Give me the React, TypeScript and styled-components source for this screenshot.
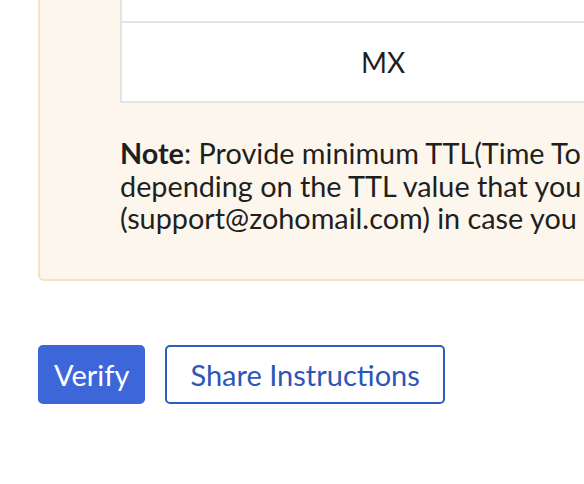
import React from 'react';
import styled, { createGlobalStyle } from 'styled-components';

const GlobalStyle = createGlobalStyle`
  body {
    margin: 0;
    font-family: Lato, "Open Sans", sans-serif;
    background: #fff;
    overflow: hidden;
  }
`;

const Page = styled.div`
  width: 584px;
  height: 484px;
  overflow: hidden;
  padding-left: 38px;
  box-sizing: border-box;
`;

const NotePanel = styled.div`
  margin-top: -42px;
  width: 720px;
  box-sizing: border-box;
  background: #fdf6ec;
  border: 2px solid #f6e3c2;
  border-radius: 6px;
  padding: 0 0 44px 80px;
`;

const RecordTable = styled.table`
  width: 526px;
  border-collapse: collapse;
  background: #fff;
`;

const Cell = styled.td<{ $h: number }>`
  height: ${p => p.$h}px;
  border: 2px solid #e2e4e7;
  text-align: center;
  font-size: 28px;
  color: #1f1f1f;
  padding: 0;
`;

const Note = styled.p`
  margin: 34px 0 0;
  font-size: 28.8px;
  line-height: 32.5px;
  color: #1f1f1f;
  white-space: nowrap;

  b {
    font-weight: 700;
  }
`;

const Actions = styled.div`
  display: flex;
  gap: 20px;
  margin-top: 64px;
`;

const Button = styled.button<{ $primary?: boolean }>`
  height: 59px;
  padding: 0 ${p => (p.$primary ? 14 : 23)}px;
  font-family: Lato, sans-serif;
  font-size: 29px;
  border-radius: 5px;
  box-sizing: border-box;
  cursor: pointer;
  border: 2px solid ${p => (p.$primary ? '#3d67d8' : '#2f5bc4')};
  background: ${p => (p.$primary ? '#3d67d8' : '#fff')};
  color: ${p => (p.$primary ? '#fff' : '#2d56b8')};
`;

export default function App() {
  return (
    <>
      <GlobalStyle />
      <Page>
        <NotePanel>
          <RecordTable>
            <tbody>
              <tr>
                <Cell $h={59} />
              </tr>
              <tr>
                <Cell $h={78}>MX</Cell>
              </tr>
            </tbody>
          </RecordTable>
          <Note>
            <b>Note</b>: Provide minimum TTL(Time To
            <br />
            depending on the TTL value that you
            <br />
            (support@zohomail.com) in case you
          </Note>
        </NotePanel>
        <Actions>
          <Button $primary>Verify</Button>
          <Button>Share Instructions</Button>
        </Actions>
      </Page>
    </>
  );
}
